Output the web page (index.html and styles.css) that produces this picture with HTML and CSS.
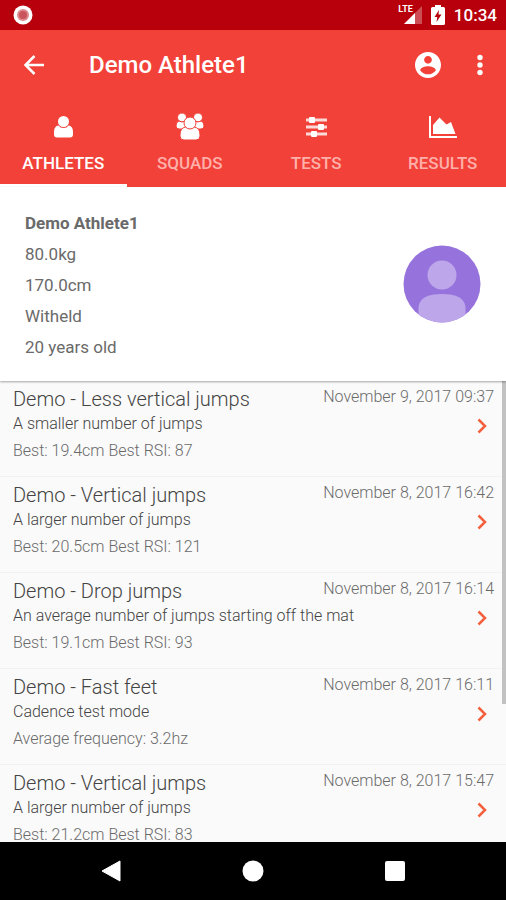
FILE: index.html
```html
<!DOCTYPE html>
<html lang="en">
  <head>
    <meta charset="UTF-8" />
    <meta name="viewport" content="width=device-width, initial-scale=1" />
    <title>Demo Athlete1</title>
    <link rel="stylesheet" href="styles.css">
  </head>

  <body>
    <!-- System status bar -->
    <div class="status-bar">
      <svg class="record" width="20" height="20" viewBox="0 0 20 20">
        <circle cx="10" cy="10" r="9.500" fill="#fff" />
        <circle cx="10" cy="10" r="6" fill="#dd8a8e" />
        <circle cx="10" cy="10" r="4" fill="#c9545c" />
      </svg>
      <div class="signal">
        <span class="lte">LTE</span>
        <svg width="18" height="18" viewBox="0 0 18 18">
          <path d="M0 18L18 0V18z" fill="#fff" fill-opacity="0.3" />
          <path d="M0 18L11 7V18z" fill="#fff" />
        </svg>
      </div>
      <svg width="14" height="20" viewBox="0 0 14 20">
        <path d="M4 0h6v2h2.500q1.500 0 1.500 1.500v15q0 1.500-1.500 1.500h-11Q0 20 0 18.500v-15Q0 2 1.500 2H4z" fill="#fff" />
        <path d="M8 5L3.500 12H6.300L5.500 17L10.500 9.500H7.500z" fill="#b7000b" />
      </svg>
      <span class="clock">10:34</span>
    </div>

    <header class="app-bar">
      <button class="icon-button" aria-label="Back">
        <svg width="24" height="24" viewBox="0 0 24 24" fill="none" stroke="#fff" stroke-width="2.500">
          <path d="M22 12H4M12.500 3L3.500 12l9 9" />
        </svg>
      </button>
      <h1>Demo Athlete1</h1>
      <button class="icon-button" aria-label="Account">
        <svg width="26" height="26" viewBox="2 2 20 20" fill="#fff">
          <path d="M12 2C6.480 2 2 6.480 2 12s4.480 10 10 10 10-4.480 10-10S17.520 2 12 2zm0 3c1.660 0 3 1.340 3 3s-1.340 3-3 3-3-1.340-3-3 1.340-3 3-3zm0 14.200c-2.500 0-4.710-1.280-6-3.220.030-1.990 4-3.080 6-3.080 1.990 0 5.970 1.090 6 3.080-1.290 1.940-3.500 3.220-6 3.220z" />
        </svg>
      </button>
      <button class="icon-button more" aria-label="More options">
        <svg width="6" height="22" viewBox="0 0 6 22" fill="#fff">
          <circle cx="3" cy="3.500" r="2.700" />
          <circle cx="3" cy="11" r="2.700" />
          <circle cx="3" cy="18.500" r="2.700" />
        </svg>
      </button>
    </header>

    <nav class="tabs">
      <a class="tab active" href="#athletes">
        <svg width="28" height="28" viewBox="0 0 28 28" fill="#fff">
          <path d="M9.500 12.500Q11 15 14.500 15t5-2.500Q24 13 24 19v2.500q0 3-3 3H8q-3 0-3-3V19q0-6 4.500-6.500z" />
          <circle cx="14.500" cy="8.500" r="5.500" />
        </svg>
        Athletes
      </a>
      <a class="tab" href="#squads">
        <svg width="28" height="28" viewBox="0 0 28 28" fill="#fff" stroke="#f24139">
          <circle cx="6" cy="4.500" r="4.500" />
          <circle cx="22" cy="4.500" r="4.500" />
          <path d="M3 8q3 2 6 0l2 5-3 3H3q-3 0-3-3 0-4 3-5z" />
          <path d="M25 8q-3 2-6 0l-2 5 3 3h5q3 0 3-3 0-4-3-5z" />
          <path d="M9.500 14Q14 17 18.500 14q5.500 1 5.500 8v1q0 4-4 4H8q-4 0-4-4v-1q0-7 5.500-8z" />
          <circle cx="14" cy="10" r="6" />
        </svg>
        Squads
      </a>
      <a class="tab" href="#tests">
        <svg width="28" height="28" viewBox="0 0 28 28" fill="#fff">
          <path fill-opacity="0.800" d="M4 5.500h21v3H4zM4 12.500h21v3H4zM4 19.500h21v3H4z" />
          <rect x="7" y="4" width="6" height="6" rx="1" />
          <rect x="16" y="11" width="6" height="6" rx="1" />
          <rect x="9" y="18" width="6" height="6" rx="1" />
        </svg>
        Tests
      </a>
      <a class="tab" href="#results">
        <svg width="28" height="28" viewBox="0 0 28 28" fill="#fff">
          <path d="M0 3h2v20h26v2H0z" />
          <path d="M4 21v-9l6.500-7.500 7 7L22 9l4.500 12z" />
        </svg>
        Results
      </a>
    </nav>

    <section class="profile">
      <div class="profile-info">
        <h2>Demo Athlete1</h2>
        <p>80.0kg</p>
        <p>170.0cm</p>
        <p>Witheld</p>
        <p>20 years old</p>
      </div>
      <svg class="avatar" width="78" height="78" viewBox="0 0 78 78">
        <defs>
          <clipPath id="avatar-clip"><circle cx="39" cy="39" r="38.500" /></clipPath>
        </defs>
        <g clip-path="url(#avatar-clip)">
          <rect width="78" height="78" fill="#9673dc" />
          <circle cx="39" cy="30" r="14.500" fill="#bea6ea" />
          <path d="M15.500 78V62Q17 49 39 49t23.500 13v16z" fill="#bea6ea" />
        </g>
      </svg>
    </section>

    <main class="results">
      <ul>
        <li>
          <a class="result" href="#result1">
            <div class="row">
              <h3>Demo - Less vertical jumps</h3>
              <time>November 9, 2017 09:37</time>
            </div>
            <div class="row">
              <p>A smaller number of jumps</p>
              <svg class="chevron" viewBox="0 0 10 16"><path d="M1.500 1.500L8 8l-6.500 6.500" /></svg>
            </div>
            <p class="score">Best: 19.4cm Best RSI: 87</p>
          </a>
        </li>
        <li>
          <a class="result" href="#result2">
            <div class="row">
              <h3>Demo - Vertical jumps</h3>
              <time>November 8, 2017 16:42</time>
            </div>
            <div class="row">
              <p>A larger number of jumps</p>
              <svg class="chevron" viewBox="0 0 10 16"><path d="M1.500 1.500L8 8l-6.500 6.500" /></svg>
            </div>
            <p class="score">Best: 20.5cm Best RSI: 121</p>
          </a>
        </li>
        <li>
          <a class="result" href="#result3">
            <div class="row">
              <h3>Demo - Drop jumps</h3>
              <time>November 8, 2017 16:14</time>
            </div>
            <div class="row">
              <p>An average number of jumps starting off the mat</p>
              <svg class="chevron" viewBox="0 0 10 16"><path d="M1.500 1.500L8 8l-6.500 6.500" /></svg>
            </div>
            <p class="score">Best: 19.1cm Best RSI: 93</p>
          </a>
        </li>
        <li>
          <a class="result" href="#result4">
            <div class="row">
              <h3>Demo - Fast feet</h3>
              <time>November 8, 2017 16:11</time>
            </div>
            <div class="row">
              <p>Cadence test mode</p>
              <svg class="chevron" viewBox="0 0 10 16"><path d="M1.500 1.500L8 8l-6.500 6.500" /></svg>
            </div>
            <p class="score">Average frequency: 3.2hz</p>
          </a>
        </li>
        <li>
          <a class="result" href="#result5">
            <div class="row">
              <h3>Demo - Vertical jumps</h3>
              <time>November 8, 2017 15:47</time>
            </div>
            <div class="row">
              <p>A larger number of jumps</p>
              <svg class="chevron" viewBox="0 0 10 16"><path d="M1.500 1.500L8 8l-6.500 6.500" /></svg>
            </div>
            <p class="score">Best: 21.2cm Best RSI: 83</p>
          </a>
        </li>
      </ul>
      <div class="scroll-thumb"></div>
    </main>

    <!-- System navigation -->
    <footer class="nav-bar">
      <button aria-label="Back">
        <svg width="20" height="22" viewBox="0 0 20 22"><path d="M19 1v20L1 11z" fill="#fff" stroke="#fff" stroke-linejoin="round" /></svg>
      </button>
      <button aria-label="Home">
        <svg width="22" height="22" viewBox="0 0 22 22"><circle cx="11" cy="11" r="10.500" fill="#fff" /></svg>
      </button>
      <button aria-label="Overview">
        <svg width="20" height="20" viewBox="0 0 20 20"><rect width="20" height="20" rx="2" fill="#fff" /></svg>
      </button>
    </footer>
  </body>
</html>
```
FILE: styles.css
```css
* {
  box-sizing: border-box;
}
body {
  display: flex;
  flex-direction: column;
  height: 100vh;
  margin: 0;
  background-color: #fafafa;
  color: #6a6a6a;
  font-family: Roboto, sans-serif;
  font-size: 16px;
}
h1, h2, h3, p, ul {
  margin: 0;
  padding: 0;
}
a {
  color: inherit;
  text-decoration: none;
}
button {
  padding: 0;
  border: none;
  background: none;
  cursor: pointer;
}
svg {
  display: block;
}

/* Status bar */
.status-bar {
  display: flex;
  align-items: center;
  flex-shrink: 0;
  height: 30px;
  padding: 0 9px 0 13px;
  background-color: #b7000b;
  color: #fff;
}
.record {
  margin-right: auto;
}
.signal {
  position: relative;
  margin-right: 9px;
}
.lte {
  position: absolute;
  top: -1px;
  right: 9px;
  font-size: 9px;
  line-height: 9px;
  font-weight: 700;
}
.clock {
  margin-left: 9px;
  font-size: 17px;
  font-weight: 500;
}

/* App bar */
.app-bar {
  display: flex;
  align-items: center;
  flex-shrink: 0;
  height: 70px;
  padding: 0 8px 0 16px;
  background-color: #f24139;
  color: #fff;
}
.app-bar h1 {
  flex: 1;
  margin-left: 37px;
  font-size: 24px;
  font-weight: 500;
}
.icon-button {
  display: flex;
  align-items: center;
  justify-content: center;
  width: 36px;
  height: 48px;
}
.more {
  margin-left: 16px;
}

/* Tabs */
.tabs {
  display: grid;
  grid-template-columns: repeat(4, 1fr);
  flex-shrink: 0;
  background-color: #f24139;
}
.tab {
  display: flex;
  flex-direction: column;
  align-items: center;
  gap: 12px;
  height: 87px;
  padding-top: 13px;
  border-bottom: 3px solid transparent;
  color: #ffb0aa;
  font-size: 17px;
  line-height: 20px;
  font-weight: 500;
  text-transform: uppercase;
}
.tab.active {
  border-bottom-color: #fff;
  color: #fff;
}

/* Athlete profile */
.profile {
  display: flex;
  align-items: center;
  justify-content: space-between;
  flex-shrink: 0;
  position: relative;
  z-index: 1;
  padding: 21px 25px 18px;
  background-color: #fff;
  box-shadow: 0 1px 2px rgba(0, 0, 0, 0.35);
}
.profile-info {
  font-size: 17px;
  line-height: 31px;
}
.profile-info h2 {
  font-size: 17px;
  font-weight: 700;
}
.avatar {
  margin-bottom: 4px;
}

/* Results list */
.results {
  flex: 1;
  min-height: 0;
  position: relative;
  overflow: hidden;
}
.results ul {
  list-style: none;
}
.result {
  display: block;
  height: 96px;
  padding: 6px 12px 0 13px;
  border-bottom: 1px solid #f2f2f2;
  color: #444;
  font-weight: 300;
  line-height: 20px;
}
.row {
  display: flex;
  justify-content: space-between;
  margin-bottom: 3px;
}
.row h3 {
  font-size: 20px;
  line-height: 24px;
  font-weight: 300;
}
.row time {
  color: #6a6a6a;
}
.result .score {
  margin-top: 7px;
  color: #6a6a6a;
}
.chevron {
  align-self: flex-end;
  width: 10px;
  height: 16px;
  margin-right: 7px;
  fill: none;
  stroke: #f4603e;
  stroke-width: 2.5px;
}
.scroll-thumb {
  position: absolute;
  top: 0;
  right: 0;
  width: 4px;
  height: 70%;
  background-color: #c2c2c2;
}

/* System navigation */
.nav-bar {
  display: flex;
  align-items: center;
  justify-content: center;
  flex-shrink: 0;
  gap: 94px;
  height: 58px;
  background-color: #000;
}
.nav-bar button {
  display: flex;
  align-items: center;
  justify-content: center;
  width: 48px;
  height: 48px;
}
```
